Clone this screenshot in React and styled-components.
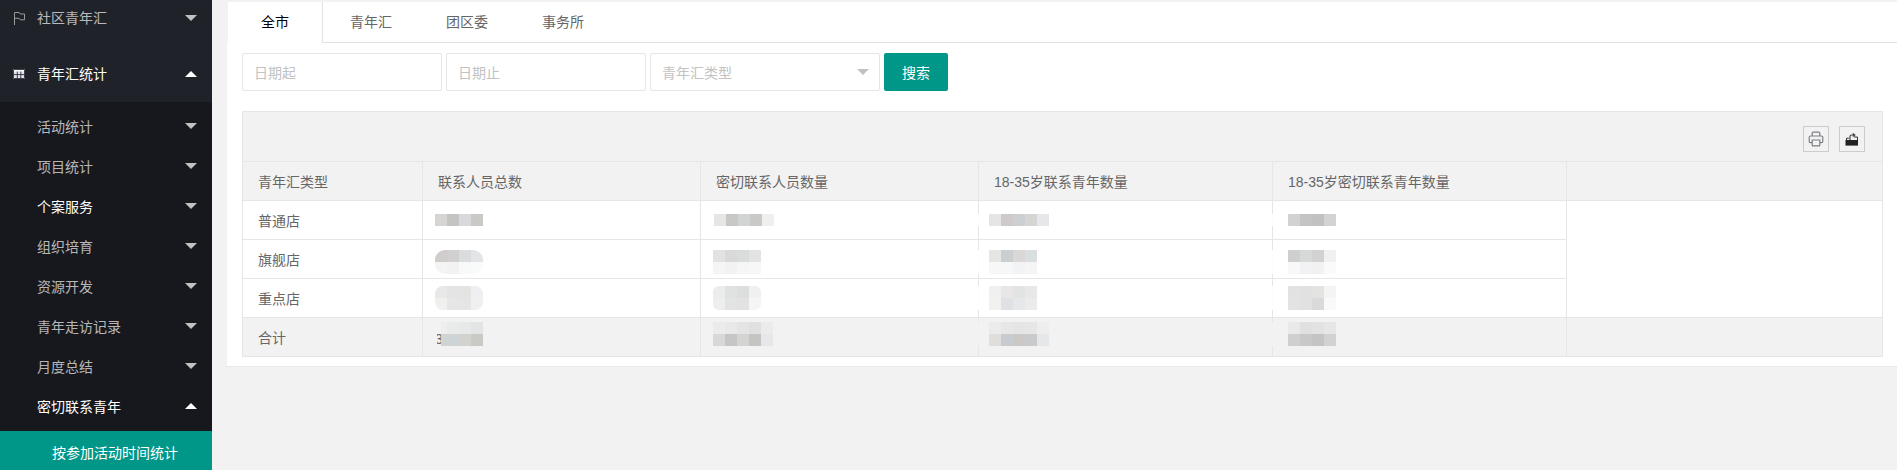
import React from 'react';
import styled, { createGlobalStyle } from 'styled-components';

const GlobalStyle = createGlobalStyle`
  html, body {
    margin: 0;
    padding: 0;
    height: 100%;
    overflow: hidden;
    background: #f2f2f2;
    font-family: "Liberation Sans", "Noto Sans CJK SC", sans-serif;
    font-size: 14px;
    color: #666;
  }
  * { box-sizing: border-box; }
`;

const Page = styled.div`
  display: flex;
  width: 1897px;
  height: 470px;
  overflow: hidden;
`;

const Sidebar = styled.aside`
  flex: none;
  width: 212px;
  height: 470px;
  overflow: hidden;
  background: #20222a;
`;

const TopItem = styled.div`
  display: flex;
  align-items: center;
  height: 56px;
  padding: 0 15px 0 37px;
  position: relative;
  color: ${({ open }) => (open ? '#fff' : 'rgba(255,255,255,0.7)')};
  &:first-child {
    margin-top: -10px;
  }
`;

const ItemIcon = styled.span`
  position: absolute;
  left: 13px;
  top: 50%;
  transform: translateY(-50%);
  display: flex;
`;

const Label = styled.span`
  flex: 1;
  line-height: 20px;
`;

const SubLabel = styled(Label)`
  padding-top: 2px;
`;

const Caret = styled.i`
  flex: none;
  width: 0;
  height: 0;
  border-left: 6px solid transparent;
  border-right: 6px solid transparent;
  ${({ open }) =>
    open
      ? 'border-bottom: 6px solid #fff;'
      : 'border-top: 6px solid #c2c2c2;'}
`;

const SubMenu = styled.div`
  background: #17181e;
  padding: 4px 0 5px;
`;

const SubItem = styled.div`
  display: flex;
  align-items: center;
  height: 40px;
  padding: 0 15px 0 37px;
  color: ${({ open }) => (open ? '#fff' : 'rgba(255,255,255,0.7)')};
`;

const ActiveItem = styled.div`
  display: flex;
  align-items: center;
  height: 42px;
  padding-left: 52px;
  background: #009688;
  color: #fff;
`;

const Main = styled.main`
  flex: 1;
  padding: 2px 0 0 15px;
`;

const Panel = styled.section`
  background: #fff;
  height: 365px;
  border-bottom: 1px solid #e9e9e9;
`;

const TabBar = styled.ul`
  display: flex;
  margin: 0;
  padding: 0 0 0 1px;
  height: 41px;
  list-style: none;
  border-bottom: 1px solid #e2e2e2;
`;

const Tab = styled.li`
  height: 41px;
  line-height: 40px;
  padding: 0 ${({ active }) => (active ? 33 : 27)}px;
  color: ${({ active }) => (active ? '#000' : '#666')};
  ${({ active }) =>
    active &&
    `
    background: #fff;
    border-right: 1px solid #e2e2e2;
    border-left: 1px solid #f2f2f2;
    margin-left: -1px;
  `}
`;

const Body = styled.div`
  padding: 10px 15px 0;
`;

const FilterRow = styled.div`
  display: flex;
  gap: 4px;
  margin-bottom: 20px;
`;

const Field = styled.div`
  display: flex;
  align-items: center;
  justify-content: space-between;
  width: ${({ width }) => width}px;
  height: 38px;
  padding: 0 10px 0 11px;
  background: #fff;
  border: 1px solid #e6e6e6;
  border-radius: 2px;
  color: #c2c2c2;
`;

const SelectArrow = styled.i`
  width: 0;
  height: 0;
  border-left: 6px solid transparent;
  border-right: 6px solid transparent;
  border-top: 6px solid #c2c2c2;
`;

const SearchButton = styled.button`
  width: 64px;
  height: 38px;
  padding: 0;
  border: 0;
  border-radius: 2px;
  background: #009688;
  color: #fff;
  font: inherit;
`;

const Toolbar = styled.div`
  display: flex;
  justify-content: flex-end;
  gap: 10px;
  height: 50px;
  padding: 14px 17px 0 0;
  background: #f2f2f2;
  border: 1px solid #e6e6e6;
  border-bottom: 0;
`;

const ToolButton = styled.span`
  display: flex;
  align-items: center;
  justify-content: center;
  width: 26px;
  height: 26px;
  border: 1px solid #ccc;
`;

const Table = styled.table`
  width: 1640px;
  table-layout: fixed;
  border-collapse: collapse;
`;

const HeadCell = styled.th`
  height: 39px;
  padding: 0 15px;
  background: #f2f2f2;
  border: 1px solid #e6e6e6;
  color: #666;
  font-weight: 400;
  text-align: left;
`;

const Cell = styled.td`
  height: 39px;
  padding: 0 15px;
  border: 1px solid #e6e6e6;
  background: ${({ total }) => (total ? '#f2f2f2' : '#fff')};
  color: #666;
`;

const MosaicWrap = styled.div`
  position: relative;
  width: max-content;
  margin-left: ${({ shift }) => shift || 0}px;
  margin-top: ${({ lift }) => (lift > 0 ? lift : 0)}px;
  margin-bottom: ${({ lift }) => (lift < 0 ? -lift : 0)}px;
`;

const Mosaic = styled.div`
  position: relative;
  display: grid;
  grid-template-columns: repeat(${({ cols }) => cols}, 12px);
  grid-auto-rows: 12px;
  overflow: hidden;
  border-radius: ${({ round }) => round || 0}px;
  box-shadow: ${({ halo }) => (halo ? `-16px 0 0 ${halo}` : 'none')};
`;

const Pixel = styled.span`
  background: ${({ tone }) => tone};
`;

// 被打码盖住的数字，只露出一点
const HiddenDigit = styled.span`
  position: absolute;
  left: 0;
  bottom: 0;
  line-height: 14px;
  color: #666;
`;

const FlagIcon = () => (
  <svg width="13" height="14" viewBox="0 0 13 14" fill="none" stroke="#9a9a9a" strokeWidth="1">
    <path d="M1.5 14V1.5H6.2L7.2 3H11.5V8.8H7.2L6.2 7.3H1.5" />
  </svg>
);

const GridIcon = () => (
  <svg width="12" height="10" viewBox="0 0 12 10">
    <rect width="12" height="10" fill="#e4e4e8" />
    <rect width="12" height="2.4" fill="#fff" />
    <path fill="none" stroke="#2a2c38" strokeWidth="0.9" d="M0.5 0.5h11v9h-11zM0.5 5.6h11M4.3 2.6v7M7.8 2.6v7" />
  </svg>
);

const PrintIcon = () => (
  <svg width="16" height="16" viewBox="0 0 16 16" fill="none" stroke="#7a7f86" strokeWidth="1.2">
    <path d="M4.2 5V2.2c0-.6.4-1 1-1h5.6c.6 0 1 .4 1 1V5" />
    <path d="M4 11.6H2.4c-.7 0-1.2-.5-1.2-1.2V6.4c0-.8.6-1.4 1.4-1.4h10.8c.8 0 1.4.6 1.4 1.4v4c0 .7-.5 1.2-1.2 1.2H12" />
    <path d="M4.2 9h7.6v5.2c0 .4-.3.6-.6.6H4.8c-.3 0-.6-.2-.6-.6z" />
  </svg>
);

const ExportIcon = () => (
  <svg width="14" height="14" viewBox="0 0 14 14">
    <path fill="#222" d="M0.5 8h12.5v5.6H0.5z" />
    <path fill="none" stroke="#333" strokeWidth="1" d="M1.5 8V6.2h2.4M9 5h3.5v3" />
    <path fill="none" stroke="#444" strokeWidth="1.2" d="M5 8V4.6C5 3.6 5.7 3 6.6 3H8" />
    <path fill="#444" d="M7.8 0.8L10.8 3 7.8 5.2z" />
  </svg>
);

const menuItems = [
  { label: '活动统计' },
  { label: '项目统计' },
  { label: '个案服务', bright: true },
  { label: '组织培育' },
  { label: '资源开发' },
  { label: '青年走访记录' },
  { label: '月度总结' },
];

const tabs = ['全市', '青年汇', '团区委', '事务所'];

const heads = [
  '青年汇类型',
  '联系人员总数',
  '密切联系人员数量',
  '18-35岁联系青年数量',
  '18-35岁密切联系青年数量',
  '',
];

const widths = [180, 278, 278, 294, 294, 316];

// 打码区域的色块，一行一个数组
const a = (...tones) => tones;
const rows = [
  {
    name: '普通店',
    lift: 0,
    values: [
      { shift: -3, tones: [a('#d6d5d3', '#c4c4c2', '#d8d9da', '#c9c9c6')] },
      { shift: -2, tones: [a('#e6e6e6', '#c8c8c6', '#d2d3d4', '#c9c9c7', '#efefef')] },
      { shift: -5, tones: [a('#e5e5e5', '#cfcaca', '#ccd0d2', '#d5d5d3', '#e7e7ea')] },
      { shift: 0, tones: [a('#d2d2d0', '#c5c4c4', '#c1c1c1', '#d3d3d5')] },
    ],
  },
  {
    name: '旗舰店',
    lift: 6,
    values: [
      {
        shift: -3,
        round: 10,
        tones: [a('#d0cccb', '#d2d0ce', '#dadcdd', '#e3e4e5'), a('#f4f4f4', '#f2f2f2', '#f8f9f9', '#f9fafa')],
      },
      {
        shift: -3,
        tones: [a('#e2e2e2', '#d9d9d8', '#d9dbdd', '#e3e3e3'), a('#f5f5f5', '#f2f2f2', '#f6f6f6', '#f7f7f7')],
      },
      {
        shift: -5,
        tones: [a('#e5e5e3', '#cbcfcf', '#d9d8d6', '#d9dfe0'), a('#f7f7f7', '#f6f7f7', '#f2f3f4', '#f5f5f5')],
      },
      {
        shift: 0,
        tones: [a('#d0cfcf', '#d7d9d9', '#d2d2d2', '#eef0f1'), a('#f8f8f8', '#f2f2f4', '#f1f1f2', '#f9fafa')],
      },
    ],
  },
  {
    name: '重点店',
    lift: 0,
    values: [
      {
        shift: -3,
        round: 8,
        tones: [a('#e8e8e8', '#e4e4e4', '#e4e4e3', '#eeeff0'), a('#f0f0ef', '#e6e6e6', '#e5e5e5', '#f0f0f1')],
      },
      {
        shift: -3,
        round: 6,
        tones: [a('#ececec', '#e0e1e1', '#dcdddd', '#f0f0f0'), a('#eeeeee', '#e2e3e3', '#e2e2e2', '#f5f5f5')],
      },
      {
        shift: -5,
        tones: [a('#f0f0f0', '#e8e7e6', '#e2e4e4', '#e8e8e8'), a('#f1f1f0', '#dfe1e4', '#e6e7e9', '#ebebeb')],
      },
      {
        shift: 0,
        tones: [a('#e2e2e2', '#e1e1e1', '#e3e3e2', '#f3f5f5'), a('#e3e3e3', '#e1e1e1', '#dadada', '#f7f9fa')],
      },
    ],
  },
];

const totals = [
  {
    shift: -3,
    digit: '3',
    tones: [
      a('linear-gradient(90deg,#f2f2f2 2px,#f2f2f2 6px,#eeeeee 6px)', '#e9eaea', '#e7e8e8', '#e3e5e5'),
      a('linear-gradient(90deg,#f2f2f2 2px,transparent 2px,transparent 6px,#ced3d6 6px)', '#ced3d6', '#d3d2cf', '#c9c9c6'),
    ],
  },
  {
    shift: -3,
    tones: [a('#ebebeb', '#e8e8e8', '#e4e4e4', '#e0e0e0', '#ebebeb'), a('#d8d8d6', '#c6c6c6', '#d4d4d3', '#c4c4c3', '#e6e7e9')],
  },
  {
    shift: -5,
    tones: [a('#ebebeb', '#e7e7e7', '#e5e5e5', '#e6e6e6', '#eeeeee'), a('#dfdedc', '#c8cbcf', '#cbc8c6', '#c9cacc', '#e6e7e9')],
  },
  {
    shift: 0,
    tones: [a('#e9e9e9', '#e0e0e0', '#e2e2e2', '#e6e6e6'), a('#cfcfcf', '#c9c8c8', '#c4c4c4', '#d2d2d2')],
  },
];

const Blur = ({ value, lift, halo }) => (
  <MosaicWrap shift={value.shift} lift={lift}>
    {value.digit && <HiddenDigit>{value.digit}</HiddenDigit>}
    <Mosaic cols={value.tones[0].length} round={value.round} halo={halo}>
      {value.tones.flat().map((tone, i) => (
        <Pixel key={i} tone={tone} />
      ))}
    </Mosaic>
  </MosaicWrap>
);

const App = () => (
  <Page>
    <GlobalStyle />
    <Sidebar>
      <TopItem>
        <ItemIcon><FlagIcon /></ItemIcon>
        <Label>社区青年汇</Label>
        <Caret />
      </TopItem>
      <TopItem open>
        <ItemIcon><GridIcon /></ItemIcon>
        <Label>青年汇统计</Label>
        <Caret open />
      </TopItem>
      <SubMenu>
        {menuItems.map((item) => (
          <SubItem key={item.label} open={item.bright}>
            <SubLabel>{item.label}</SubLabel>
            <Caret />
          </SubItem>
        ))}
        <SubItem open>
          <SubLabel>密切联系青年</SubLabel>
          <Caret open />
        </SubItem>
      </SubMenu>
      <ActiveItem>按参加活动时间统计</ActiveItem>
    </Sidebar>
    <Main>
      <Panel>
        <TabBar>
          {tabs.map((tab, i) => (
            <Tab key={tab} active={i === 0}>{tab}</Tab>
          ))}
        </TabBar>
        <Body>
          <FilterRow>
            <Field width={200}>日期起</Field>
            <Field width={200}>日期止</Field>
            <Field width={230}>
              青年汇类型
              <SelectArrow />
            </Field>
            <SearchButton>搜索</SearchButton>
          </FilterRow>
          <Toolbar>
            <ToolButton><PrintIcon /></ToolButton>
            <ToolButton><ExportIcon /></ToolButton>
          </Toolbar>
          <Table>
            <colgroup>
              {widths.map((w, i) => (
                <col key={i} width={w} />
              ))}
            </colgroup>
            <thead>
              <tr>
                {heads.map((head, i) => (
                  <HeadCell key={i}>{head}</HeadCell>
                ))}
              </tr>
            </thead>
            <tbody>
              {rows.map((row, i) => (
                <tr key={row.name}>
                  <Cell>{row.name}</Cell>
                  {row.values.map((value, j) => (
                    <Cell key={j}>
                      <Blur
                        value={value}
                        lift={row.lift}
                        halo={j >= 2 ? 'rgba(255,255,255,0.85)' : null}
                      />
                    </Cell>
                  ))}
                  {i === 0 && <Cell rowSpan={3} />}
                </tr>
              ))}
              <tr>
                <Cell total>合计</Cell>
                {totals.map((value, j) => (
                  <Cell total key={j}>
                    <Blur
                      value={value}
                      lift={-6}
                      halo={j >= 2 ? 'rgba(242,242,242,0.85)' : null}
                    />
                  </Cell>
                ))}
                <Cell total />
              </tr>
            </tbody>
          </Table>
        </Body>
      </Panel>
    </Main>
  </Page>
);

export default App;
